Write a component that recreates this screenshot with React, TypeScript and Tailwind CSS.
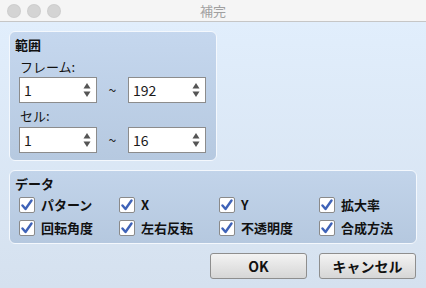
import React from "react";

const font = { fontFamily: '"Noto Sans CJK JP", "Noto Sans", sans-serif' };

function Spin({ value }: { value: string }) {
  return (
    <div className="flex h-[26px] w-[78px] items-center justify-between border border-[#8c8c8c] bg-white pl-[4px] pr-[5px]">
      <span className="text-[14px] leading-none text-[#1a1a1a]">{value}</span>
      <svg width="8" height="16" viewBox="0 0 8 16">
        <path d="M4 1 L7.5 6.5 L0.5 6.5 Z" fill="#555" />
        <path d="M4 15 L7.5 9.5 L0.5 9.5 Z" fill="#555" />
      </svg>
    </div>
  );
}

function Check({ label }: { label: string }) {
  return (
    <div className="flex items-center gap-[6px]">
      <div className="flex h-[16px] w-[16px] items-center justify-center rounded-[2px] border border-[#8a8a8a] bg-white">
        <svg width="12" height="12" viewBox="0 0 12 12">
          <path d="M1.5 6.5 L4.5 10 L10.5 1.5" fill="none" stroke="#3f63b8" strokeWidth="2.4" strokeLinecap="round" strokeLinejoin="round" />
        </svg>
      </div>
      <span className="text-[13px] font-bold leading-[16px] text-[#111]">{label}</span>
    </div>
  );
}

export default function App() {
  return (
    <div style={font} className="flex h-[288px] w-[426px] flex-col overflow-hidden">
      <div className="relative flex h-[22px] items-center border-b border-[#c6c6c6] bg-[#f5f5f5] px-[8px]">
        <div className="flex gap-[8px]">
          <div className="h-[12px] w-[12px] rounded-full bg-[#d4d4d4] ring-1 ring-[#cdcdcd]" />
          <div className="h-[12px] w-[12px] rounded-full bg-[#d4d4d4] ring-1 ring-[#cdcdcd]" />
          <div className="h-[12px] w-[12px] rounded-full bg-[#d4d4d4] ring-1 ring-[#cdcdcd]" />
        </div>
        <div className="absolute inset-0 flex items-center justify-center text-[13px] text-[#a0a0a0]">補完</div>
      </div>
      <div className="flex flex-1 flex-col bg-gradient-to-b from-[#e1eefc] to-[#d5e1ef] px-[9px] pt-[9px]">
        <div className="flex h-[130px] w-[208px] flex-col rounded-[6px] border border-[#f4f8fd] bg-gradient-to-b from-[#c5d7ee] to-[#b6c9e0] px-[5px] pt-[5px]">
          <div className="h-[16px] text-[13px] font-bold leading-[16px] text-[#111]">範囲</div>
          <div className="mt-[6px] pl-[5px] text-[13px] leading-[16px] text-[#111]">フレーム:</div>
          <div className="mt-[2px] flex items-center pl-[4px]">
            <Spin value="1" />
            <span className="w-[31px] text-center text-[14px] text-[#222]">~</span>
            <Spin value="192" />
          </div>
          <div className="mt-[5px] pl-[5px] text-[13px] leading-[16px] text-[#111]">セル:</div>
          <div className="mt-[3px] flex items-center pl-[4px]">
            <Spin value="1" />
            <span className="w-[31px] text-center text-[14px] text-[#222]">~</span>
            <Spin value="16" />
          </div>
        </div>
        <div className="mt-[9px] flex h-[74px] w-[408px] flex-col rounded-[6px] border border-[#f4f8fd] bg-gradient-to-b from-[#c2d4ea] to-[#b5c8df] px-[5px] pt-[5px]">
          <div className="h-[16px] text-[13px] font-bold leading-[16px] text-[#111]">データ</div>
          <div className="mt-[5px] grid grid-cols-[100px_100px_100px_100px] gap-y-[7px] pl-[4px]">
            <Check label="パターン" />
            <Check label="X" />
            <Check label="Y" />
            <Check label="拡大率" />
            <Check label="回転角度" />
            <Check label="左右反転" />
            <Check label="不透明度" />
            <Check label="合成方法" />
          </div>
        </div>
        <div className="mt-[9px] flex justify-end gap-[12px] pr-[1px]">
          <button className="h-[26px] w-[97px] rounded-[3px] border border-[#8e8e8e] bg-gradient-to-b from-[#f3f3f3] to-[#d6d6d6] text-[14px] font-bold text-[#111]">OK</button>
          <button className="h-[26px] w-[97px] rounded-[3px] border border-[#8e8e8e] bg-gradient-to-b from-[#f3f3f3] to-[#d6d6d6] text-[14px] font-bold text-[#111]">キャンセル</button>
        </div>
      </div>
    </div>
  );
}
